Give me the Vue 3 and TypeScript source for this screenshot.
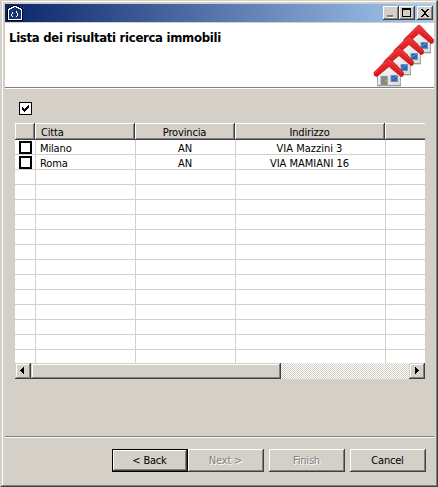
<script setup lang="ts">
interface Estate {
  city: string
  province: string
  address: string
}

const results: Estate[] = [
  { city: 'Milano', province: 'AN', address: 'VIA Mazzini 3' },
  { city: 'Roma', province: 'AN', address: 'VIA MAMIANI 16' },
]
const emptyRows = 13
const houses = [3, 2, 1, 0]
</script>

<template>
  <div class="window">
    <header class="titlebar">
      <svg class="app-icon" width="16" height="16" viewBox="0 0 16 16" shape-rendering="crispEdges">
        <path d="M0 4h1V3h1V2h2V1h2V0h4v1h2v1h2v1h1v1h1v12H0z" fill="#000" />
        <path d="M1 15V4h1V3h2V2h2V1h4v1h2v1h2v1h1v11z" fill="#fff" />
        <path d="M2 14V5h1V4h2V3h2V2h2v1h2v1h2v1h1v9z" fill="#173275" />
        <path d="M5 7h1v2H5zM4 9h1v2H4zM5 11h1v1H5zM9 6h1v2H9zM10 8h1v3h-1zM9 11h1v1H9z" fill="#fff" />
      </svg>
      <div class="controls">
        <button class="ctl" aria-label="Minimize">
          <svg width="16" height="14" shape-rendering="crispEdges">
            <path d="M5 11h6v1H5z" fill="#fff" /><path d="M4 9h6v2H4z" fill="#808080" />
          </svg>
        </button>
        <button class="ctl" aria-label="Maximize">
          <svg width="16" height="14" shape-rendering="crispEdges">
            <path d="M3 2h9v9H3zM4 4v6h7V4z" fill="#000" fill-rule="evenodd" />
          </svg>
        </button>
        <button class="ctl close" aria-label="Close">
          <svg width="16" height="14" shape-rendering="crispEdges">
            <path d="M4 3h2v1h1v1h2V4h1V3h2v1h-1v1h-1v1H9v2h1v1h1v1h1v1h-2v-1H9V9H7v1H6v1H4v-1h1V9h1V8h1V6H6V5H5V4H4z" fill="#000" />
          </svg>
        </button>
      </div>
    </header>

    <section class="banner">
      <h1>Lista dei risultati ricerca immobili</h1>
      <svg class="houses" width="61" height="64" viewBox="0 0 61 64">
        <defs>
          <linearGradient id="roof" x1="0" y1="0" x2="0" y2="1">
            <stop offset="0" stop-color="#ee3438" /><stop offset="1" stop-color="#d81419" />
          </linearGradient>
          <linearGradient id="wall" x1="0" y1="0" x2="1" y2="1">
            <stop offset="0" stop-color="#fff" /><stop offset="1" stop-color="#d8d8d6" />
          </linearGradient>
        </defs>
        <g v-for="n in houses" :key="n" :transform="`translate(${n * 10} ${34 - n * 11})`">
          <path d="M4.500 16L16 6l11.500 10v12.500H4.500z" fill="url(#wall)" stroke="#a9aaa8" stroke-width="1" />
          <path d="M4 28.800h24" stroke="#8e908c" stroke-width="1" />
          <path d="M7.700 19h7v9.500h-7z" fill="#858883" stroke="#b5b6b2" stroke-width=".6" />
          <path d="M12 23h1.500v1.500H12z" fill="#d5b52d" />
          <path d="M18 18.500h6.500v6H18z" fill="#2f66ad" stroke="#6c8fbd" stroke-width="1" />
          <path d="M18.500 22l5.500-3" stroke="#5d91d0" stroke-width="1" />
          <path d="M1 15.500L14.500 2l1.500-1 1.500 1L30.500 15.500l-.5 3.500-2 .5L16 9.500 4 19.500l-2.500-1z" fill="url(#roof)" stroke="#c41218" stroke-width=".8" />
          <path d="M2 16L16 2.500 29.500 16" fill="none" stroke="#f04a4a" stroke-width=".8" />
        </g>
      </svg>
    </section>

    <main class="content">
      <div class="check-all">
        <svg width="11" height="11" shape-rendering="crispEdges">
          <path d="M2 4h1v1h1v1h1V5h1V4h1V3h1V2h1v3H8v1H7v1H6v1H5v1H4V8H3V7H2z" fill="#000" />
        </svg>
      </div>

      <div class="table">
        <div class="row head">
          <div class="cell"></div>
          <div class="cell">Citta</div>
          <div class="cell center">Provincia</div>
          <div class="cell center">Indirizzo</div>
          <div class="cell"></div>
        </div>
        <div v-for="r in results" :key="r.city" class="row">
          <div class="cell mark"><span class="box"></span></div>
          <div class="cell">{{ r.city }}</div>
          <div class="cell center">{{ r.province }}</div>
          <div class="cell center address">{{ r.address }}</div>
          <div class="cell"></div>
        </div>
        <div v-for="i in emptyRows" :key="i" class="row">
          <div v-for="c in 5" :key="c" class="cell"></div>
        </div>
        <div class="scrollbar">
          <div class="arrow">
            <svg width="16" height="16" shape-rendering="crispEdges"><path d="M5 7h1V6h1V5h1V4h1v7H8v-1H7V9H6V8H5z" /></svg>
          </div>
          <div class="thumb"></div>
          <div class="track"></div>
          <div class="arrow">
            <svg width="16" height="16" shape-rendering="crispEdges"><path d="M6 4h1v1h1v1h1v1h1v1H9v1H8v1H7v1H6z" /></svg>
          </div>
        </div>
      </div>
    </main>

    <footer class="actions">
      <button class="btn default">&lt; Back</button>
      <button class="btn gap" disabled>Next &gt;</button>
      <button class="btn gap" disabled>Finish</button>
      <button class="btn">Cancel</button>
    </footer>
  </div>
</template>

<style>
body {
  margin: 0;
  background: #d4d0c8;
}
</style>

<style scoped>
* {
  box-sizing: border-box;
}
.window {
  width: 438px;
  height: 487px;
  padding: 3px 3px 0 4px;
  border: 1px solid;
  border-color: #d4d0c8 #404040 #404040 #d4d0c8;
  box-shadow: inset 1px 0 #d4d0c8, inset -1px -1px #808080, inset 2px 1px #fff;
  background: #d4d0c8;
  display: flex;
  flex-direction: column;
  font: 11px/14px 'DejaVu Sans Condensed', 'DejaVu Sans', sans-serif;
  font-stretch: condensed;
  color: #000;
}
.titlebar {
  height: 18px;
  flex: none;
  display: flex;
  justify-content: space-between;
  align-items: center;
  padding: 0 1px 0 2px;
  background: linear-gradient(90deg, #0a246a, #a6caf0);
}
.app-icon {
  display: block;
}
.controls {
  display: flex;
}
.ctl {
  width: 16px;
  height: 14px;
  padding: 0;
  border: 0;
  background: #d4d0c8;
  box-shadow: inset -1px -1px #404040, inset 1px 1px #fff, inset -2px -2px #808080;
}
.ctl.close {
  margin-left: 2px;
}
.ctl svg {
  display: block;
}
.banner {
  flex: none;
  height: 67px;
  border-top: 1px solid #d4d0c8;
  border-bottom: 1px solid #fff;
  box-shadow: inset 0 -1px #808080;
  background: #fff;
  display: flex;
  justify-content: space-between;
}
h1 {
  margin: 7px 0 0 4px;
  font: bold 13px/16px 'DejaVu Sans Condensed', 'DejaVu Sans', sans-serif;
  font-stretch: condensed;
  letter-spacing: -0.3px;
  white-space: nowrap;
}
.houses {
  display: block;
}
.content {
  flex: 1;
  padding: 13px 9px 0 10px;
}
.check-all {
  width: 13px;
  height: 13px;
  margin-left: 4px;
  border: 1px solid #000;
  background: #fff;
}
.check-all svg {
  display: block;
}
.table {
  width: 410px;
  height: 256px;
  margin-top: 8px;
  background: #fff;
  display: flex;
  flex-direction: column;
}
.row {
  display: grid;
  grid-template-columns: 20px 100px 100px 150px 40px;
  height: 15px;
  flex: none;
}
.cell {
  border-bottom: 1px solid #d4d0c8;
  border-left: 1px solid #d4d0c8;
  padding: 2px 0 0 4px;
  line-height: 14px;
  height: 15px;
  white-space: nowrap;
  letter-spacing: -0.15px;
}
.cell:first-child {
  border-left: 0;
}
.row:nth-last-child(2) {
  height: 13px;
}
.row:nth-last-child(2) .cell {
  height: 13px;
  border-bottom: 0;
}
.center {
  text-align: center;
  padding-left: 0;
  padding-right: 1px;
}
.address {
  padding-right: 2px;
  letter-spacing: 0;
}
.head {
  height: 17px;
}
.head .cell {
  height: 17px;
  border: 0;
  padding-top: 3px;
  padding-left: 6px;
  background: #d4d0c8;
  box-shadow: inset -1px -1px #404040, inset 1px 1px #fff, inset -2px -2px #808080;
}
.head .center {
  padding-left: 0;
}
.head .cell:last-child {
  box-shadow: inset 0 -1px #404040, inset 1px 1px #fff, inset 0 -2px #808080;
}
.cell.mark {
  padding: 1px 0 0 4px;
}
.box {
  display: block;
  width: 13px;
  height: 13px;
  border: 2px solid #000;
  background: #fff;
}
.scrollbar {
  display: flex;
  height: 16px;
  flex: none;
}
.arrow,
.thumb {
  background: #d4d0c8;
  box-shadow: inset -1px -1px #404040, inset 1px 1px #d4d0c8, inset -2px -2px #808080, inset 2px 2px #fff;
}
.arrow {
  width: 16px;
}
.arrow svg {
  display: block;
}
.thumb {
  width: 250px;
}
.track {
  flex: 1;
  background: repeating-conic-gradient(#fff 0 25%, #d4d0c8 0 50%) 0 0 / 2px 2px;
}
.actions {
  flex: none;
  height: 50px;
  border-top: 1px solid #808080;
  background: linear-gradient(#fff 0 1px, transparent 1px);
  display: flex;
  justify-content: flex-end;
  padding: 12px 8px 0 0;
}
.btn {
  width: 76px;
  height: 23px;
  padding: 1px 1px 0 0;
  border: 0;
  background: #d4d0c8;
  font: inherit;
  letter-spacing: -0.2px;
  color: #000;
  box-shadow: inset -1px -1px #404040, inset 1px 1px #fff, inset -2px -2px #808080;
}
.btn.default {
  border: 1px solid #000;
}
.btn:disabled {
  color: #808080;
  text-shadow: 1px 1px #fff;
}
.btn.gap {
  margin-right: 5px;
}
</style>
